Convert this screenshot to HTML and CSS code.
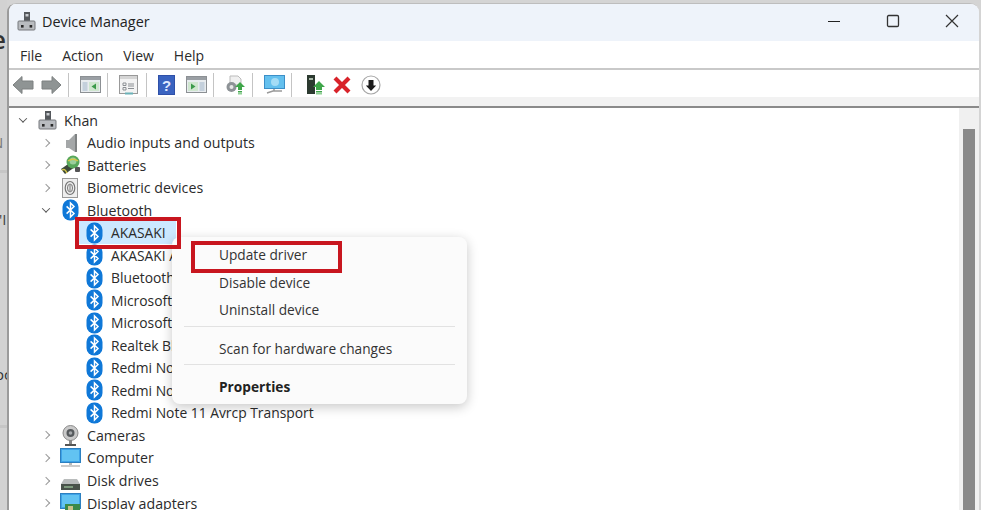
FILE: index.html
```html
<!DOCTYPE html>
<html lang="en">
<head>
<meta charset="utf-8">
<title>Device Manager</title>
<link rel="stylesheet" href="styles.css">
</head>
<body>
<svg class="defs" width="0" height="0" aria-hidden="true">
  <defs>
    <symbol id="bt" viewBox="0 0 17 22">
      <rect x="0.5" y="0.5" width="16" height="21" rx="7.5" fill="#0f78d8"/>
      <path d="M4.6 7.4 12 14.4 8.5 18V4L12 7.6 4.6 14.6" fill="none" stroke="#fff" stroke-width="1.5"/>
    </symbol>
    <symbol id="host" viewBox="0 0 19 20">
      <rect x="7" y="1" width="6" height="9" fill="#55585c"/>
      <rect x="8.5" y="3" width="3" height="2.5" fill="#c9ccd0"/>
      <rect x="1" y="10" width="17" height="9" rx="1" fill="#b9bcc0" stroke="#77797c"/>
      <rect x="4" y="14" width="2.6" height="2.6" fill="#2a2a2a"/>
      <rect x="12.6" y="14" width="2.6" height="2.6" fill="#2a2a2a"/>
    </symbol>
  </defs>
</svg>

<div class="strip">
  <span class="frag frag-e">e</span>
  <span class="frag frag-n">N</span>
  <span class="frag frag-i">'I</span>
  <span class="frag frag-oc">oc</span>
  <span class="strip-line strip-line-a"></span>
  <span class="strip-line strip-line-b"></span>
</div>

<div class="window">
  <header class="titlebar">
    <svg class="title-icon" width="19" height="20"><use href="#host"/></svg>
    <span class="title">Device Manager</span>
    <div class="controls">
      <svg width="14" height="14" viewBox="0 0 14 14"><path d="M1 7.5h12" stroke="#222" stroke-width="1.2"/></svg>
      <svg width="14" height="14" viewBox="0 0 14 14"><rect x="1.500" y="1.500" width="11" height="11" rx="1.200" fill="none" stroke="#333" stroke-width="1.300"/></svg>
      <svg width="14" height="14" viewBox="0 0 14 14"><path d="M1 1l12 12M13 1 1 13" stroke="#333" stroke-width="1.200"/></svg>
    </div>
  </header>

  <nav class="menubar">
    <span>File</span><span>Action</span><span>View</span><span>Help</span>
  </nav>

  <div class="toolbar">
    <svg class="tb-arrows" width="50" height="20" viewBox="0 0 50 20">
      <path d="M1 10 10 1.500v4.500h11v8H10V18.500z" fill="#8f9494" stroke="#7c8080"/>
      <path d="M49 10 40 1.500v4.500H30v8h10V18.500z" fill="#8f9494" stroke="#7c8080"/>
    </svg>
    <i class="sep"></i>
    <svg width="21" height="17" viewBox="0 0 21 17"><rect x=".5" y=".5" width="20" height="16" fill="#e8ecef" stroke="#8c9094"/><rect x="1" y="1" width="19" height="3" fill="#9a9fa4"/><rect x="2.500" y="6" width="5" height="9" fill="#c4d0dc"/><rect x="9" y="6" width="10" height="9" fill="#cfe6cf"/><path d="M16 7.500v6l-4.500-3z" fill="#3b9a4a"/></svg>
    <i class="sep"></i>
    <svg class="tb-doc" width="19" height="20" viewBox="0 0 19 20"><rect x=".5" y=".5" width="18" height="18" fill="#f3f3f3" stroke="#999"/><rect x="1" y="1" width="17" height="3" fill="#d5d5d5"/><path d="M4 8h3v2.500H4zM4 12.500h3V15H4zM9 9h6M9 11h6M9 13.500h6" fill="none" stroke="#8b8f93"/><rect x="6" y="17.500" width="8" height="2" fill="#6cb2b8"/></svg>
    <i class="sep"></i>
    <svg class="tb-help" width="17" height="20" viewBox="0 0 17 20"><rect width="17" height="20" fill="#2f50a8"/><rect x="1" y="1" width="15" height="18" fill="#3a63c0"/><text x="8.500" y="15.500" class="q">?</text></svg>
    <svg width="21" height="17" viewBox="0 0 21 17"><rect x=".5" y=".5" width="20" height="16" fill="#e8ecef" stroke="#8c9094"/><rect x="1" y="1" width="19" height="3" fill="#9a9fa4"/><rect x="13.500" y="6" width="5" height="9" fill="#c4d0dc"/><rect x="2" y="6" width="10" height="9" fill="#cfe6cf"/><path d="M5 7.500v6l4.500-3z" fill="#3b9a4a"/></svg>
    <i class="sep"></i>
    <svg width="21" height="20" viewBox="0 0 21 20"><path d="M5 1h8l3 3v6H5z" fill="#f0f0f0" stroke="#bbb"/><circle cx="6.500" cy="12" r="5" fill="#8d9296"/><circle cx="6.500" cy="12" r="2" fill="#e6e6e6"/><path d="M15 7l5 5h-3v3h-4v-3h-3z" fill="#3fa64a"/><rect x="13" y="16" width="4" height="1.500" fill="#3fa64a"/><rect x="13" y="18" width="4" height="1.500" fill="#8fd095"/></svg>
    <i class="sep"></i>
    <svg width="21" height="19" viewBox="0 0 21 19"><rect x=".5" y=".5" width="20" height="13" fill="#64c0ee" stroke="#3c8fc8"/><circle cx="11" cy="7" r="4" fill="#a4dcf6"/><path d="M10 14v2M3 18l6-2h9" stroke="#9a9a9a" stroke-width="1.500" fill="none"/></svg>
    <i class="sep sep-wide"></i>
    <svg class="tb-enable" width="19" height="20" viewBox="0 0 19 20"><rect x="1" y="0" width="8" height="19" fill="#2c3a30"/><rect x="3" y="3" width="4" height="2" fill="#a8b8a8"/><path d="M13 6l6 6h-3v3h-6v-3H7z" fill="#3fa64a"/><rect x="10" y="16" width="6" height="1.500" fill="#3fa64a"/><rect x="10" y="18" width="6" height="1.500" fill="#8fd095"/></svg>
    <svg class="tb-del" width="18" height="18" viewBox="0 0 18 18"><path d="M2 2l14 14M16 2 2 16" stroke="#d8232a" stroke-width="4.200"/></svg>
    <svg width="20" height="20" viewBox="0 0 20 20"><circle cx="10" cy="10" r="9" fill="#fff" stroke="#a8a8a8" stroke-width="1.200"/><path d="M10 16 4.800 10.500H7.500V5h5v5.500h2.700z" fill="#1c1c1c"/></svg>
  </div>
  <div class="toolbar-foot"></div>

  <div class="content">
    <ul class="tree">
      <li class="row root"><span class="chev chev-open"></span><svg class="ico" width="19" height="20"><use href="#host"/></svg><span>Khan</span></li>
      <li class="row cat"><span class="chev"></span><svg class="ico" width="19" height="20" viewBox="0 0 19 20"><path d="M8 7 14 1v18l-6-4H5V7z" fill="#a4a7a8"/><path d="M14 1h2v18h-2z" fill="#7f8283"/></svg><span>Audio inputs and outputs</span></li>
      <li class="row cat"><span class="chev"></span><svg class="ico" width="21" height="21" viewBox="0 0 21 21"><path d="M1 14 11 7l4 5-10 7z" fill="#3d4a3a"/><circle cx="13" cy="7" r="6.500" fill="#58a85a"/><circle cx="13" cy="6" r="3.500" fill="#9ccf9c"/><path d="M8 6c3-2 7-2 10 0M2 15c2-1 3-1 5 3" stroke="#d6c64a" stroke-width="1.500" fill="none"/><rect x="15" y="12" width="5" height="5" rx="1" fill="#555"/></svg><span>Batteries</span></li>
      <li class="row cat"><span class="chev"></span><svg class="ico" width="17" height="20" viewBox="0 0 17 20"><rect x=".5" y=".5" width="15" height="19" fill="#eee" stroke="#999"/><ellipse cx="8" cy="10" rx="4.800" ry="6.500" fill="none" stroke="#777" stroke-width="1.200"/><ellipse cx="8" cy="10" rx="2.500" ry="4" fill="none" stroke="#777"/><path d="M8 7v6" stroke="#777"/></svg><span>Biometric devices</span></li>
      <li class="row cat"><span class="chev chev-open"></span><svg class="ico" width="17" height="22"><use href="#bt"/></svg><span>Bluetooth</span></li>
      <li class="row dev"><span class="selected"><svg class="ico" width="17" height="22"><use href="#bt"/></svg>AKASAKI</span></li>
      <li class="row dev"><svg class="ico" width="17" height="22"><use href="#bt"/></svg><span>AKASAKI Avrcp Transport</span></li>
      <li class="row dev"><svg class="ico" width="17" height="22"><use href="#bt"/></svg><span>Bluetooth Device</span></li>
      <li class="row dev"><svg class="ico" width="17" height="22"><use href="#bt"/></svg><span>Microsoft Bluetooth Enumerator</span></li>
      <li class="row dev"><svg class="ico" width="17" height="22"><use href="#bt"/></svg><span>Microsoft Bluetooth LE Enumerator</span></li>
      <li class="row dev"><svg class="ico" width="17" height="22"><use href="#bt"/></svg><span>Realtek Bluetooth Adapter</span></li>
      <li class="row dev"><svg class="ico" width="17" height="22"><use href="#bt"/></svg><span>Redmi Note 11</span></li>
      <li class="row dev"><svg class="ico" width="17" height="22"><use href="#bt"/></svg><span>Redmi Note 11</span></li>
      <li class="row dev"><svg class="ico" width="17" height="22"><use href="#bt"/></svg><span>Redmi Note 11 Avrcp Transport</span></li>
      <li class="row cat"><span class="chev"></span><svg class="ico" width="17" height="21" viewBox="0 0 17 21"><circle cx="8.500" cy="8" r="7.500" fill="#c9c9c9" stroke="#8a8a8a"/><circle cx="8.500" cy="8" r="4" fill="#55595c"/><circle cx="8.500" cy="8" r="1.800" fill="#a5a8ab"/><path d="M3 19h11v2H3z" fill="#555"/><path d="M7 15h3v4H7z" fill="#888"/></svg><span>Cameras</span></li>
      <li class="row cat"><span class="chev"></span><svg class="ico" width="21" height="20" viewBox="0 0 21 20"><rect x=".5" y=".5" width="20" height="14" fill="#3ea3e8" stroke="#2c80c0"/><rect x="2" y="2" width="17" height="11" fill="#62c3f2"/><path d="M9 15h3v2H9z" fill="#bbb"/><path d="M1 18h19" stroke="#bbb" stroke-width="1.500"/></svg><span>Computer</span></li>
      <li class="row cat"><span class="chev"></span><svg class="ico ico-disk" width="19" height="11" viewBox="0 0 19 11"><path d="M3 0h13l3 5H0z" fill="#b9bcbc"/><rect y="5" width="19" height="6" fill="#49524a"/><rect x="3" y="7" width="9" height="2" fill="#7d9a7d"/></svg><span>Disk drives</span></li>
      <li class="row cat"><span class="chev"></span><svg class="ico" width="21" height="20" viewBox="0 0 21 20"><rect x=".5" y=".5" width="20" height="15" fill="#3ea3e8" stroke="#2c80c0"/><rect x="2" y="2" width="17" height="12" fill="#62c3f2"/><rect x="5" y="11" width="15" height="9" fill="#3b8a4a"/><rect x="8" y="13" width="5" height="4" fill="#c9c28a"/></svg><span>Display adapters</span></li>
    </ul>
    <div class="scrollbar"><div class="thumb"></div></div>

    <div class="ctx">
      <div class="ctx-item">Update driver</div>
      <div class="ctx-item">Disable device</div>
      <div class="ctx-item">Uninstall device</div>
      <hr class="ctx-sep">
      <div class="ctx-item">Scan for hardware changes</div>
      <hr class="ctx-sep">
      <div class="ctx-item ctx-bold">Properties</div>
    </div>
    <div class="mark mark-dev"></div>
    <div class="mark mark-menu"></div>
  </div>
</div>
</body>
</html>
```

FILE: styles.css
```css
* { box-sizing: border-box; }
html, body { margin: 0; height: 100%; overflow: hidden; }
body {
  display: flex;
  width: 981px;
  height: 510px;
  background: #d4d4d4;
  font-family: "Open Sans", "Noto Sans", sans-serif;
  font-size: 14.2px;
  color: #2b2b2b;
}
.defs { position: absolute; }

.strip {
  position: relative;
  flex: 0 0 7px;
  overflow: hidden;
  background: #d2d2d2;
}
.frag { position: absolute; line-height: 1; color: #333; }
.frag-e { left: -9px; top: 26px; font-size: 26px; font-weight: 600; color: #333; }
.frag-n { left: -8px; top: 135px; font-size: 15px; color: #777; }
.frag-i { left: -1px; top: 212px; font-size: 15px; color: #444; }
.frag-oc { left: -5px; top: 367px; font-size: 15px; }
.strip-line { position: absolute; left: 0; right: 0; height: 3px; background: #c6c6c6; }
.strip-line-a { top: 170px; }
.strip-line-b { top: 425px; }

.window {
  flex: 1;
  display: flex;
  flex-direction: column;
  margin: 3px 2px 0 0;
  background: #fff;
  border-left: 2px solid #9b9b9b;
  border-top: 1px solid #bdbdbd;
  border-radius: 9px 9px 0 0;
  overflow: hidden;
}

.titlebar {
  flex: 0 0 37px;
  display: flex;
  align-items: center;
  padding: 0 0 3px 8px;
  background: #eef3fa;
}
.title-icon { margin-right: 6px; }
.title { font-size: 14.4px; color: #222; }
.controls {
  display: flex;
  gap: 45px;
  margin-left: auto;
  margin-right: 20px;
}

.menubar {
  flex: 0 0 29px;
  display: flex;
  align-items: center;
  gap: 20px;
  padding: 2px 0 0 11px;
  font-size: 14px;
  background: #fff;
  border-bottom: 2px solid #c9c9c9;
}

.toolbar {
  flex: 0 0 27px;
  display: flex;
  align-items: center;
  gap: 0;
  padding: 2px 0 0 3px;
  background: #fff;
}
.sep { flex: 0 0 1px; width: 1px; height: 24px; background: #c4c4c4; margin: 0 11px 0 6px; }
.sep-wide { margin-right: 14px; }
.tb-doc { margin-right: 2px; }
.tb-help { margin-right: 11px; }
.tb-enable { margin-right: 8px; }
.tb-del { margin-right: 10px; }
.q { font: 700 15px "Liberation Sans", sans-serif; fill: #dfe8ff; text-anchor: middle; }
.toolbar-foot {
  flex: 0 0 11px;
  background: #f2f2f2;
  border-bottom: 2px solid #8a8a8a;
}

.content { position: relative; flex: 1; display: flex; min-height: 0; }
.tree {
  flex: 1;
  list-style: none;
  margin: 0;
  padding: 1px 0 0;
  overflow: hidden;
}
.row {
  display: flex;
  align-items: center;
  height: 22.53px;
  white-space: nowrap;
}
.root { padding-left: 11px; }
.cat { padding-left: 34px; }
.dev { padding-left: 77px; font-size: 13.85px; }
.ico { flex: none; margin-right: 8px; }
.root .ico { margin-left: 12px; margin-right: 7px; }
.cat .ico { margin-left: 11px; width: 21px; margin-right: 6px; }
.ico-disk { height: 11px; align-self: flex-end; margin-bottom: 2px; }
.chev {
  flex: none;
  width: 6px;
  height: 6px;
  border-right: 1.2px solid #9a9a9a;
  border-bottom: 1.2px solid #9a9a9a;
  transform: rotate(-45deg);
}
.chev-open { transform: rotate(45deg) translate(-1px, -1px); border-color: #555; }
.selected {
  display: flex;
  align-items: center;
  width: 97px;
  height: 23px;
  margin-left: -7px;
  padding-left: 7px;
  background: #cce8ff;
}

.scrollbar {
  flex: 0 0 20px;
  padding: 21px 4px 0;
  background: #f0f0f0;
}
.thumb { height: 100%; background: #898989; }

.ctx {
  position: absolute;
  left: 163px;
  top: 129px;
  width: 295px;
  height: 167px;
  padding-top: 4px;
  font-size: 13.7px;
  background: #fbfbfb;
  border-radius: 8px;
  box-shadow: 0 3px 12px rgba(0, 0, 0, .22);
}
.ctx-item {
  display: flex;
  align-items: center;
  height: 27.5px;
  padding-left: 47px;
  color: #333;
}
.ctx-sep { margin: 2px 12px 8px; border: 0; border-top: 1px solid #e2e2e2; }
.ctx-bold { font-weight: 700; color: #222; }

.mark { position: absolute; border: 4px solid #c8161f; }
.mark-dev { left: 66px; top: 109px; width: 106px; height: 32px; }
.mark-menu { left: 182px; top: 133px; width: 151px; height: 32px; }
```
